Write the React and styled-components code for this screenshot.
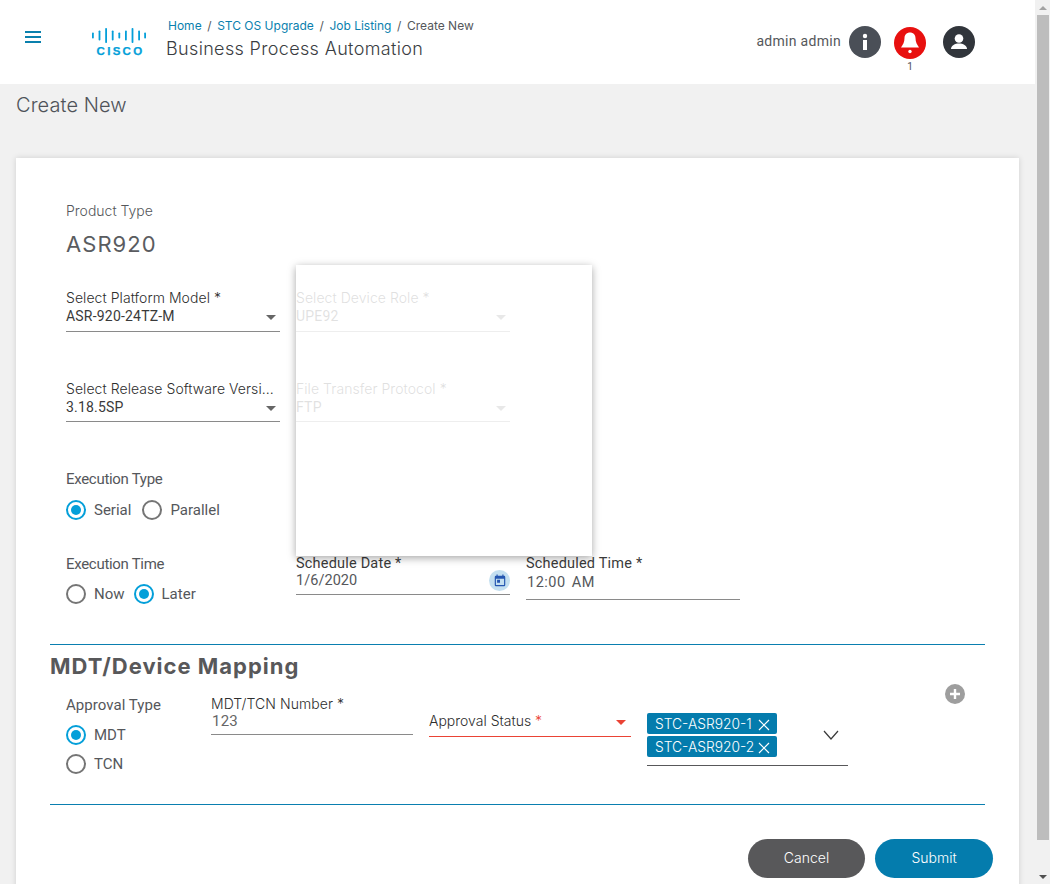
import React from "react";
import styled, { createGlobalStyle } from "styled-components";

const Global = createGlobalStyle`
  html, body { margin: 0; padding: 0; height: 884px; overflow: hidden; background: #f1f1f1; }
  * { box-sizing: border-box; }
`;
const Shell = styled.div`
  display: flex; width: 1050px; height: 884px; overflow: hidden;
  font-family: Inter, "Liberation Sans", sans-serif; color: #4f5156;
`;
const Main = styled.div`width: 1035px; flex: none; height: 884px; overflow: hidden;`;
const Track = styled.div`
  width: 15px; flex: none; height: 884px; background: #f1f1f1; display: flex; flex-direction: column; align-items: center; padding-left: 1px;
`;
const ArrowBox = styled.div`height: 15px; display: flex; align-items: center; justify-content: center; flex: none;`;
const Thumb = styled.div`width: 12px; flex: 1; background: #bdbdbd; margin-bottom: 29px;`;
const ScrollArrow = styled.span`
  width: 0; height: 0; border-left: 4px solid transparent; border-right: 4px solid transparent;
  ${p => p.$down ? "border-top: 4px solid #505050;" : "border-bottom: 4px solid #a3a3a3;"}
`;
const Header = styled.header`
  height: 84px; background: #fff; display: flex; align-items: flex-start; position: relative;
`;
const Burger = styled.button`
  border: 0; background: none; padding: 0; margin: 31px 0 0 25px; width: 16px; height: 12px; display: flex; flex-direction: column; justify-content: space-between;
  span { display: block; height: 2px; background: #0a80ad; }
`;
const Logo = styled.div`
  margin: 28px 0 0 51px; width: 54px; display: flex; flex-direction: column; align-items: center; color: #049fd9;
  svg { display: block; }
`;
const LogoWord = styled.span`
  font: 700 11.5px/12px "Liberation Sans", sans-serif; letter-spacing: 2.3px; margin-top: 2px; margin-left: 3px; -webkit-text-stroke: .25px #049fd9;
`;
const Titles = styled.div`margin: 18px 0 0 20px; display: flex; flex-direction: column;`;
const Crumbs = styled.nav`
  font-size: 12px; line-height: 16px; padding-left: 2px; display: flex; gap: 5.6px; color: #55575b;
  a { color: #0a7fae; text-decoration: none; }
`;
const AppName = styled.h1`margin: 4px 0 0; font-size: 18px; font-weight: 300; line-height: 22px; color: #3a3d42; letter-spacing: .35px;`;
const UserArea = styled.div`margin: 26px 0 0 auto; padding-right: 60px; display: flex; align-items: flex-start;`;
const UserName = styled.span`font: 400 14px/30px Roboto, sans-serif; letter-spacing: .3px; color: #55575b; margin-right: 8px;`;
const IconStack = styled.div`display: flex; flex-direction: column; align-items: center; margin: ${p => p.$down || 0}px 0 0 ${p => p.$gap}px;`;
const Badge = styled.span`font: 400 10px/11px Roboto, sans-serif; color: #4f5156; margin-top: 2px;`;
const PageTitle = styled.h2`margin: 0; padding: 9px 0 0 16px; height: 74px; font-size: 20px; line-height: 24px; font-weight: 300; color: #4f5359; letter-spacing: .08px;`;
const Card = styled.main`
  margin: 0 16px; height: 760px; background: #fff; padding: 45px 34px 0; position: relative;
  box-shadow: 0 0 6px rgba(0,0,0,.14);
`;
const Indented = styled.div`padding-left: 16px;`;
const SmallLabel = styled.div`font-size: 14px; line-height: 16px; font-weight: 300; color: #55575b;`;
const ProductValue = styled.div`font-size: 22px; line-height: 26px; margin-top: 12px; font-weight: 400; color: #5a5c60; letter-spacing: 1.05px;`;
const FieldRow = styled.div`display: flex; gap: 16px; margin-top: ${p => p.$top}px;`;
const SelectField = styled.div`width: 214px; flex: none;`;
const FieldLabel = styled.div`font-size: 14px; line-height: 16px; color: #2e2e2e; font-weight: 300; white-space: nowrap; letter-spacing: .06px;`;
const SelectBox = styled.div`
  height: ${p => p.$h}px; border-bottom: 1px solid #8a8a8a; display: flex; align-items: center; justify-content: space-between;
  font: 400 14px Roboto, sans-serif; letter-spacing: .2px; color: #3a3a3a; padding-right: 4px; padding-bottom: 5px;
`;
const Caret = styled.i`
  width: 0; height: 0; border-left: 5px solid transparent; border-right: 5px solid transparent;
  border-top: 5px solid ${p => p.$color || "#666"}; margin-top: 3px;
`;
const GroupBlock = styled.div`margin-top: ${p => p.$top}px;`;
const GroupLabel = styled.div`font: 400 15px/16px Roboto, sans-serif; letter-spacing: ${p => p.$tight ? "-.3px" : ".05px"}; color: #55575b;`;
const RadioLine = styled.div`display: flex; align-items: center; margin-top: ${p => p.$top}px; height: 20px;`;
const RadioCircle = styled.span`
  width: 20px; height: 20px; border-radius: 50%; flex: none; border: 2px solid ${p => p.$on ? "#049fd9" : "#757575"}; display: flex; align-items: center; justify-content: center; background: #fff;
  &::after { content: ""; width: 10px; height: 10px; border-radius: 50%; background: ${p => p.$on ? "#049fd9" : "transparent"}; }
`;
const RadioText = styled.span`font: 400 15px/20px Roboto, sans-serif; color: #55575b; margin: 0 ${p => p.$after}px 0 8px;`;
const ScheduleRow = styled.div`display: flex; align-items: flex-start; margin-top: 36px;`;
const ScheduleLeft = styled.div`width: 230px; flex: none;`;
const DateField = styled.div`width: 214px; flex: none; margin-right: 16px;`;
const LabelTight = styled.div`font: 400 14.5px/16px Roboto, sans-serif; color: #3a3a3a; letter-spacing: .2px;`;
const DateBox = styled.div`
  height: 23px; border-bottom: 1px solid #8a8a8a; display: flex; align-items: flex-start; justify-content: space-between;
  font: 400 14.5px/18px Roboto, sans-serif; letter-spacing: .05px; color: #55575b;
`;
const CalBadge = styled.span`width: 21px; height: 21px; margin-top: -2px; border-radius: 50%; background: #c3dff0; display: flex; align-items: center; justify-content: center; flex: none; color: #2456b0;`;
const TimeBox = styled.div`
  height: 28px; border-bottom: 1px solid #8a8a8a; padding: 2px 0 0 1px; font: 400 14.5px/18px Roboto, sans-serif; letter-spacing: .5px; color: #55575b; word-spacing: 2px;
`;
const Section = styled.section`margin-top: 40px; height: 161px; display: flex; flex-direction: column;`;
const SectionRule = styled.div`height: 1px; flex: none; background: #0a7fb0; margin-top: ${p => (p.$end ? "auto" : "0")};`;
const SectionTitle = styled.h3`margin: 8px 0 0; font-size: 22px; line-height: 27px; font-weight: 700; color: #58585a; letter-spacing: 1px;`;
const MapRow = styled.div`display: flex; align-items: flex-start; padding-left: 16px; margin-top: 4px;`;
const ApprovalCol = styled.div`width: 145px; flex: none; padding-top: 13px;`;
const NumberField = styled.div`width: 202px; flex: none; margin-right: 16px; padding-top: 12px;`;
const NumberBox = styled.div`height: 23px; border-bottom: 1px solid #8a8a8a; font: 400 15px/18px Roboto, sans-serif; letter-spacing: .2px; padding-left: 1px; color: #666;`;
const StatusField = styled.div`
  width: 202px; flex: none; margin: 28px 16px 0 0; height: 25px; display: flex; flex-direction: column;
`;
const StatusValue = styled.div`
  height: 24px; flex: none; display: flex; justify-content: space-between; align-items: center; padding: 0 5px 7px 0;
  font-size: 14px; font-weight: 300; color: #2e2e2e; em { color: #ea4335; font-style: normal; }
`;
const StatusRule = styled.div`height: 1px; flex: none; background: #ea4335;`;
const TagField = styled.div`
  width: 201px; flex: none; margin-top: 17px; height: 65px; border-bottom: 1px solid #58585a; display: flex; justify-content: space-between; padding-top: 12px;
`;
const TagColumn = styled.div`display: flex; flex-direction: column; gap: 2px;`;
const Tag = styled.span`
  width: 130px; height: 21px; background: #047cad; border-radius: 2px; color: #fff; font-size: 13.8px; font-weight: 300; line-height: 20px; padding: 0 7px 0 8px; display: flex; align-items: center; justify-content: space-between; white-space: nowrap;
  svg { margin-top: 2px; flex: none; }
`;
const Chevron = styled.span`margin: 11px 9px 0 0; color: #3a3a3a; display: block;`;
const AddBtn = styled.span`
  width: 20px; height: 20px; margin-left: 97px; border-radius: 50%; background: #9e9e9e; color: #fff; display: flex; align-items: center; justify-content: center; flex: none;
`;
const Footer = styled.div`display: flex; justify-content: flex-end; gap: 10px; margin: 34px -8px 0 0;`;
const Pill = styled.button`
  height: 39px; width: ${p => p.$w}px; border: 0; border-radius: 20px; color: #fff; background: ${p => p.$bg}; font: 300 14px Inter, sans-serif; padding: 0 0 2px;
`;
const LoadingVeil = styled.div`
  position: absolute; left: 280px; top: 107px; width: 296px; height: 291px; background: rgba(255,255,255,.85);
  box-shadow: 0 2px 8px rgba(0,0,0,.35);
`;

const Radio = ({ on, after = 10, children }) => (<><RadioCircle $on={on} /><RadioText $after={after}>{children}</RadioText></>);

const CiscoBars = () => (
  <svg width="54" height="15" viewBox="0 0 54 15" fill="currentColor">
    {[[0,6],[6.6,10],[13.2,15],[19.8,10],[26.4,6],[33,10],[39.6,15],[46.2,10],[52.2,6]].map(([x,h]) => (
      <rect key={x} x={x} y={(15-h)/2} width="1.8" height={h} rx=".8" />
    ))}
  </svg>
);

const CircleIcon = ({ bg, children }) => (
  <svg width="32" height="32" viewBox="0 0 32 32"><circle cx="16" cy="16" r="16" fill={bg} />{children}</svg>
);

const CloseMark = () => (
  <svg width="12" height="12" viewBox="0 0 12 12" stroke="currentColor" strokeWidth="1.2"><path d="M1 1l10 10M11 1L1 11" /></svg>
);

export default function App() {
  return (
    <Shell>
      <Global />
      <Main>
        <Header>
          <Burger><span /><span /><span /></Burger>
          <Logo><CiscoBars /><LogoWord>CISCO</LogoWord></Logo>
          <Titles>
            <Crumbs><a>Home</a><span>/</span><a>STC OS Upgrade</a><span>/</span><a>Job Listing</a><span>/</span><span>Create New</span></Crumbs>
            <AppName>Business Process Automation</AppName>
          </Titles>
          <UserArea>
            <UserName>admin admin</UserName>
            <CircleIcon bg="#4a4f57"><circle cx="16" cy="10" r="2.2" fill="#fff" /><rect x="14" y="14" width="4" height="10" fill="#fff" /></CircleIcon>
            <IconStack $gap={13} $down={1}>
              <CircleIcon bg="#e8100f"><path d="M16 5.5c-3 0-5.5 2.2-5.5 5.5 0 4-1.5 6.5-3.5 9.5h18c-2-3-3.5-5.5-3.5-9.5 0-3.3-2.5-5.5-5.5-5.5z" fill="#fff" /><circle cx="16" cy="24.5" r="1.7" fill="#fff" /></CircleIcon>
              <Badge>1</Badge>
            </IconStack>
            <IconStack $gap={17}>
              <CircleIcon bg="#31353b"><circle cx="16" cy="12.5" r="4.3" fill="#fff" /><path d="M8 23c0-3.5 4-5.5 8-5.5s8 2 8 5.5z" fill="#fff" /></CircleIcon>
            </IconStack>
          </UserArea>
        </Header>
        <PageTitle>Create New</PageTitle>
        <Card>
          <Indented>
            <SmallLabel>Product Type</SmallLabel>
            <ProductValue>ASR920</ProductValue>
            <FieldRow $top={33}>
              <SelectField><FieldLabel>Select Platform Model *</FieldLabel><SelectBox $h={26}>ASR-920-24TZ-M<Caret /></SelectBox></SelectField>
              <SelectField><FieldLabel>Select Device Role *</FieldLabel><SelectBox $h={26}>UPE92<Caret /></SelectBox></SelectField>
            </FieldRow>
            <FieldRow $top={49}>
              <SelectField><FieldLabel>Select Release Software Versi...</FieldLabel><SelectBox $h={25}>3.18.5SP<Caret /></SelectBox></SelectField>
              <SelectField><FieldLabel>File Transfer Protocol *</FieldLabel><SelectBox $h={25}>FTP<Caret /></SelectBox></SelectField>
            </FieldRow>
            <GroupBlock $top={49}>
              <GroupLabel $tight>Execution Type</GroupLabel>
              <RadioLine $top={13}><Radio on after={11}>Serial</Radio><Radio>Parallel</Radio></RadioLine>
            </GroupBlock>
            <ScheduleRow>
              <ScheduleLeft>
                <GroupLabel $tight>Execution Time</GroupLabel>
                <RadioLine $top={12}><Radio after={9}>Now</Radio><Radio on>Later</Radio></RadioLine>
              </ScheduleLeft>
              <DateField>
                <LabelTight>Schedule Date *</LabelTight>
                <DateBox>1/6/2020<CalBadge><svg width="14" height="14" viewBox="0 0 24 24" fill="currentColor"><path d="M19 3h-1V1h-2v2H8V1H6v2H5a2 2 0 0 0-2 2v14a2 2 0 0 0 2 2h14a2 2 0 0 0 2-2V5a2 2 0 0 0-2-2zm0 16H5V8h14v11zM7 10h5v5H7z" /></svg></CalBadge></DateBox>
              </DateField>
              <DateField>
                <LabelTight>Scheduled Time *</LabelTight>
                <TimeBox>12:00 AM</TimeBox>
              </DateField>
            </ScheduleRow>
          </Indented>
          <Section>
            <SectionRule />
            <SectionTitle>MDT/Device Mapping</SectionTitle>
            <MapRow>
              <ApprovalCol>
                <GroupLabel>Approval Type</GroupLabel>
                <RadioLine $top={12}><Radio on>MDT</Radio></RadioLine>
                <RadioLine $top={9}><Radio>TCN</Radio></RadioLine>
              </ApprovalCol>
              <NumberField>
                <FieldLabel>MDT/TCN Number *</FieldLabel>
                <NumberBox>123</NumberBox>
              </NumberField>
              <StatusField>
                <StatusValue><span>Approval Status <em>*</em></span><Caret $color="#ea4335" /></StatusValue>
                <StatusRule />
              </StatusField>
              <TagField>
                <TagColumn>
                  <Tag>STC-ASR920-1 <CloseMark /></Tag>
                  <Tag>STC-ASR920-2 <CloseMark /></Tag>
                </TagColumn>
                <Chevron><svg width="16" height="10" viewBox="0 0 16 10" fill="none" stroke="currentColor" strokeWidth="1.2"><path d="M1 1l7 8 7-8" /></svg></Chevron>
              </TagField>
              <AddBtn><svg width="12" height="12" viewBox="0 0 12 12" stroke="currentColor" strokeWidth="2.4"><path d="M6 1v10M1 6h10" /></svg></AddBtn>
            </MapRow>
            <SectionRule $end />
          </Section>
          <Footer>
            <Pill $w={117} $bg="#58585a">Cancel</Pill>
            <Pill $w={118} $bg="#047cad">Submit</Pill>
          </Footer>
          <LoadingVeil />
        </Card>
      </Main>
      <Track>
        <ArrowBox><ScrollArrow /></ArrowBox>
        <Thumb />
        <ArrowBox><ScrollArrow $down /></ArrowBox>
      </Track>
    </Shell>
  );
}
